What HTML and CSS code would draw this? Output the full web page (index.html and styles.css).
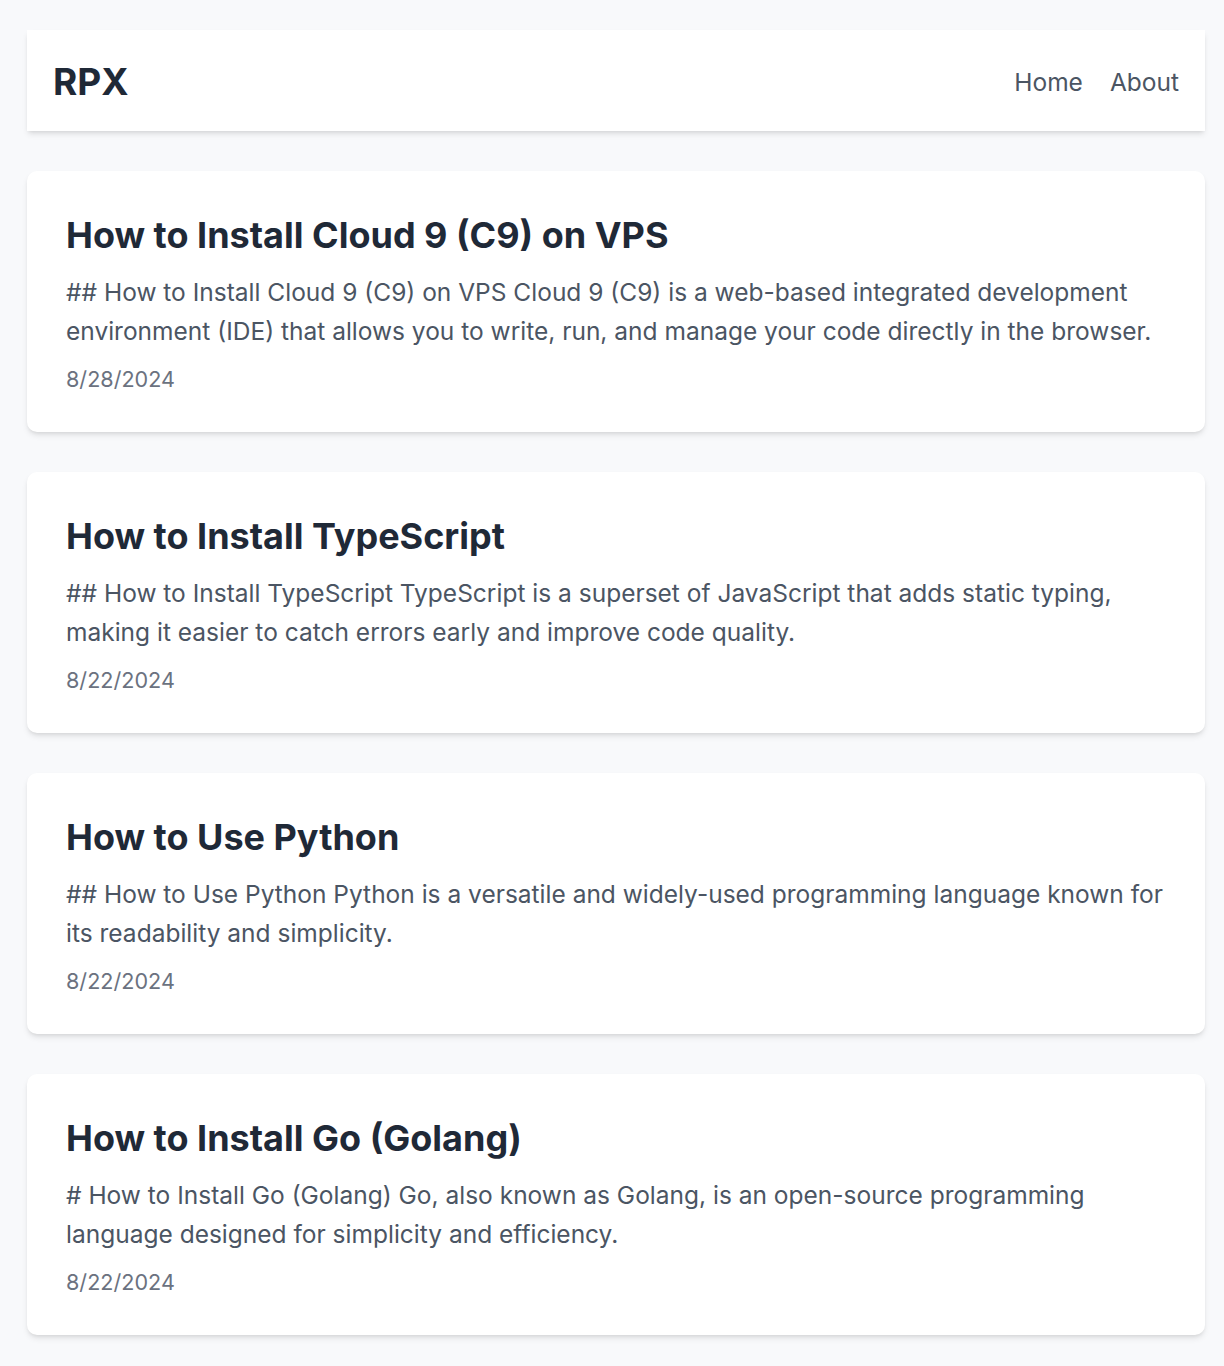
FILE: index.html
```html
<!DOCTYPE html>
<html lang="en">
<head>
<meta charset="utf-8">
<title>RPX</title>
<link rel="stylesheet" href="styles.css">
</head>
<body>
<div class="page">
  <header class="site-header">
    <div class="logo">RPX</div>
    <nav class="nav">
      <a href="#">Home</a>
      <a href="#">About</a>
    </nav>
  </header>
  <main class="posts">
    <article class="card">
      <h2 class="card-title">How to Install Cloud 9 (C9) on VPS</h2>
      <p class="card-excerpt">## How to Install Cloud 9 (C9) on VPS Cloud 9 (C9) is a web-based integrated development environment (IDE) that allows you to write, run, and manage your code directly in the browser.</p>
      <div class="card-date">8/28/2024</div>
    </article>
    <article class="card">
      <h2 class="card-title">How to Install TypeScript</h2>
      <p class="card-excerpt">## How to Install TypeScript TypeScript is a superset of JavaScript that adds static typing, making it easier to catch errors early and improve code quality.</p>
      <div class="card-date">8/22/2024</div>
    </article>
    <article class="card">
      <h2 class="card-title">How to Use Python</h2>
      <p class="card-excerpt">## How to Use Python Python is a versatile and widely-used programming language known for its readability and simplicity.</p>
      <div class="card-date">8/22/2024</div>
    </article>
    <article class="card">
      <h2 class="card-title">How to Install Go (Golang)</h2>
      <p class="card-excerpt"># How to Install Go (Golang) Go, also known as Golang, is an open-source programming language designed for simplicity and efficiency.</p>
      <div class="card-date">8/22/2024</div>
    </article>
  </main>
</div>
</body>
</html>
```
FILE: styles.css
```css
* { box-sizing: border-box; }
html, body { margin: 0; padding: 0; }
body {
  background: #f8f9fb;
  font-family: Inter, "Noto Sans", sans-serif;
  color: #1f2937;
}
.page {
  width: 1178px;
  margin-left: 27px;
  padding-top: 30px;
  padding-bottom: 30px;
}
.site-header {
  background: #fff;
  height: 101px;
  display: flex;
  align-items: center;
  justify-content: space-between;
  padding: 2px 26px 0;
  box-shadow: 0 4px 6px -1px rgba(0,0,0,0.1), 0 2px 4px -2px rgba(0,0,0,0.1);
}
.logo {
  font-size: 37px;
  font-weight: 700;
  color: #1f2937;
}
.nav {
  display: flex;
  gap: 27px;
}
.nav a {
  font-size: 24.5px;
  color: #4b5563;
  text-decoration: none;
}
.posts {
  display: flex;
  flex-direction: column;
  gap: 40px;
  margin-top: 40px;
}
.card {
  background: #fff;
  border-radius: 10px;
  padding: 40px 39px 38px 39px;
  box-shadow: 0 4px 6px -1px rgba(0,0,0,0.1), 0 2px 4px -2px rgba(0,0,0,0.1);
}
.card-title {
  margin: 0;
  font-size: 36px;
  font-weight: 700;
  line-height: 48px;
  color: #1f2937;
}
.card-excerpt {
  margin: 14px 0 0;
  font-size: 24.5px;
  line-height: 38.5px;
  color: #4b5563;
}
.card-date {
  margin-top: 14px;
  font-size: 21.6px;
  line-height: 30px;
  color: #6b7280;
}
```
